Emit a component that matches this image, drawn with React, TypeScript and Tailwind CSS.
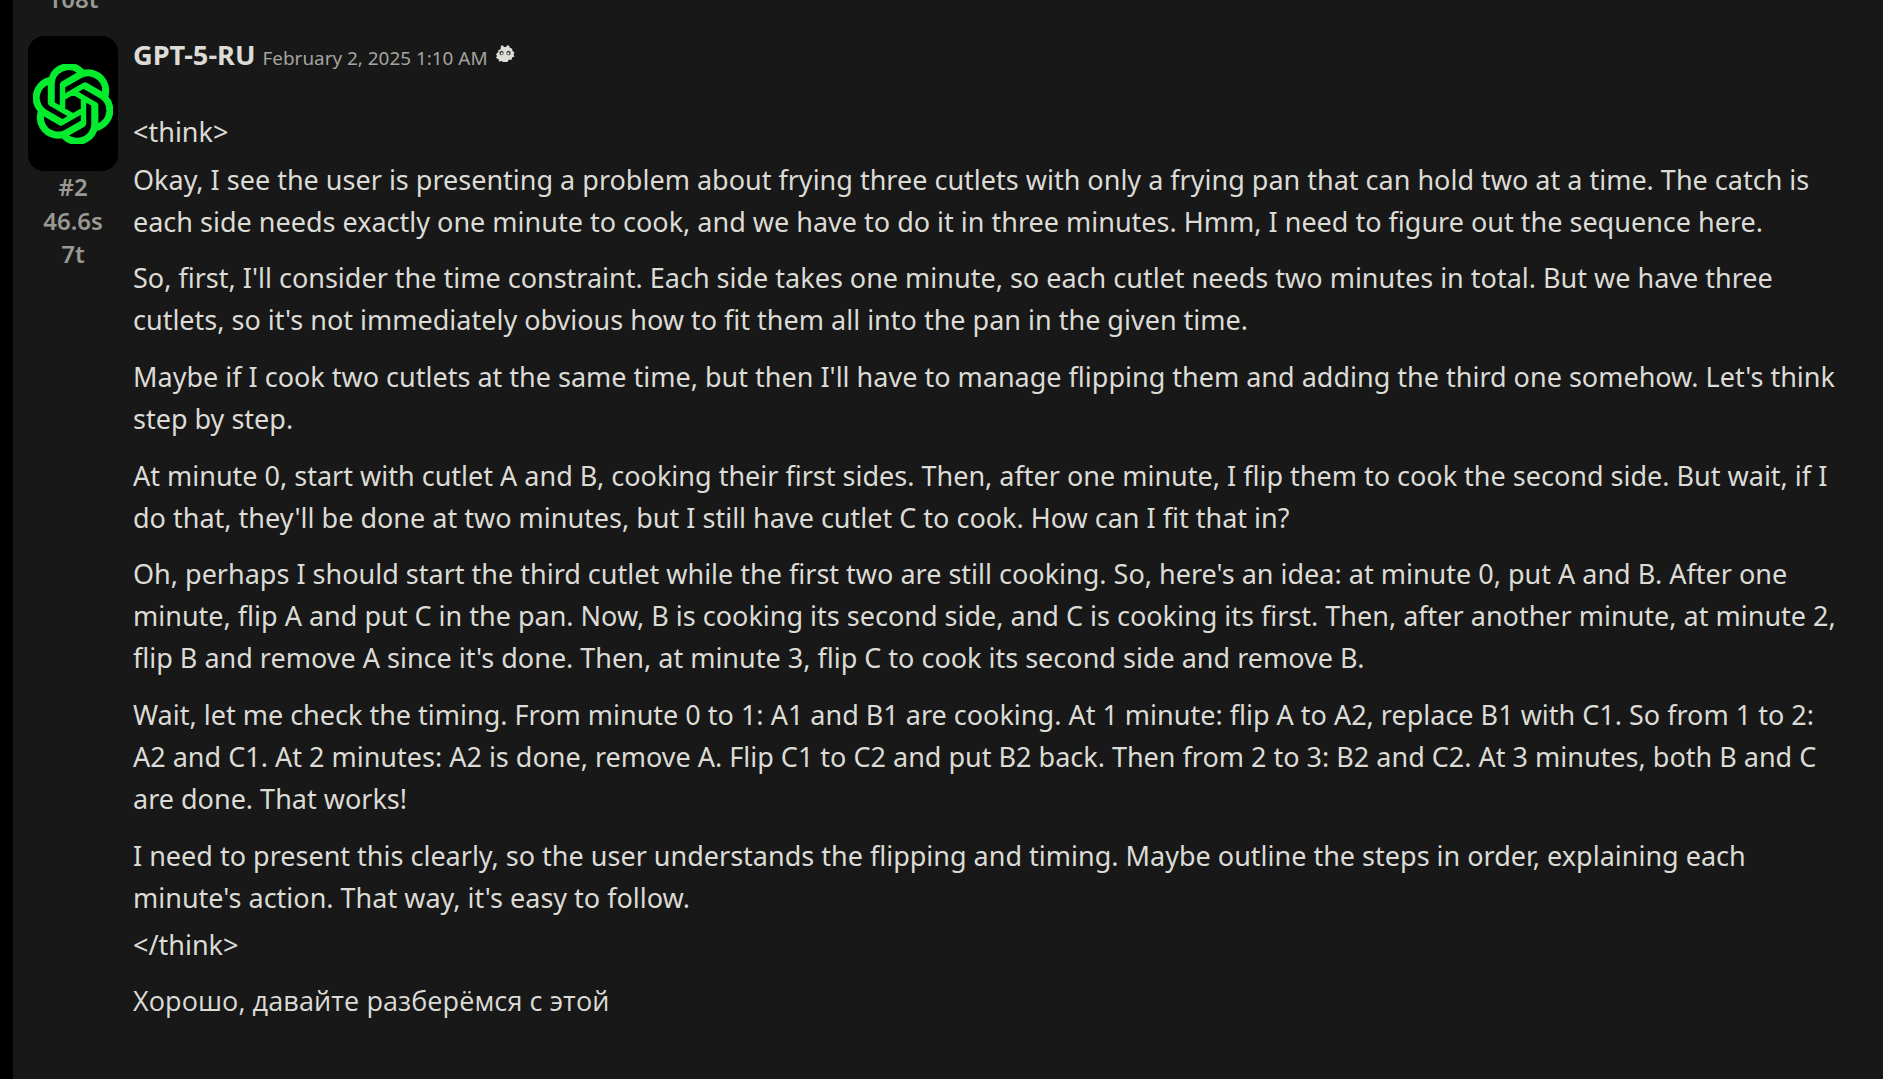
import { SiOpenai } from "react-icons/si";

const paragraphs: string[][] = [
  ["So, first, I'll consider the time constraint. Each side takes one minute, so each cutlet needs two minutes in total. But we have three", "cutlets, so it's not immediately obvious how to fit them all into the pan in the given time."],
  ["Maybe if I cook two cutlets at the same time, but then I'll have to manage flipping them and adding the third one somehow. Let's think", "step by step."],
  ["At minute 0, start with cutlet A and B, cooking their first sides. Then, after one minute, I flip them to cook the second side. But wait, if I", "do that, they'll be done at two minutes, but I still have cutlet C to cook. How can I fit that in?"],
  ["Oh, perhaps I should start the third cutlet while the first two are still cooking. So, here's an idea: at minute 0, put A and B. After one", "minute, flip A and put C in the pan. Now, B is cooking its second side, and C is cooking its first. Then, after another minute, at minute 2,", "flip B and remove A since it's done. Then, at minute 3, flip C to cook its second side and remove B."],
  ["Wait, let me check the timing. From minute 0 to 1: A1 and B1 are cooking. At 1 minute: flip A to A2, replace B1 with C1. So from 1 to 2:", "A2 and C1. At 2 minutes: A2 is done, remove A. Flip C1 to C2 and put B2 back. Then from 2 to 3: B2 and C2. At 3 minutes, both B and C", "are done. That works!"],
];

function Lines({ lines }: { lines: string[] }) {
  return (
    <p className="whitespace-nowrap">
      {lines.map((l) => (
        <span key={l} className="block">{l}</span>
      ))}
    </p>
  );
}

function BotIcon() {
  return (
    <svg viewBox="0 0 20 19" className="w-[20px] h-[19px]" aria-hidden="true">
      <path fill="#dfded8" d="M6 0.500h2l1 1.500h2l1-1.500h2l1 2.500 2 .5.500 2.500 2 1.500-1 2 1 2-2.500 1-.5 2.500-2.500-.5-1.500 2.500H8L6.500 16l-2.500.5-.5-2.500-2.500-1 1-2-1-2 2-1.500.5-2.500 2-.5z" />
      <circle cx="6.500" cy="8" r="2.200" fill="#4a4946" />
      <circle cx="13.500" cy="8" r="2.200" fill="#4a4946" />
      <circle cx="6.800" cy="8.400" r="1" fill="#f4f4f0" />
      <circle cx="13.200" cy="8.400" r="1" fill="#f4f4f0" />
    </svg>
  );
}

export default function App() {
  return (
    <div className="flex h-screen overflow-hidden bg-black font-['Noto_Sans','Open_Sans',sans-serif] text-[#dcdbd5]">
      <div className="w-[13px] shrink-0" />
      <main className="flex-1 bg-[#181818]">
        <div className="w-[120px] text-center text-[24px] leading-[33px] font-semibold text-[#9a9994] -mt-[18px] h-[54px]">108t</div>
        <article className="flex">
          <aside className="w-[90px] shrink-0 ml-[15px] mr-[15px] flex flex-col items-center">
            <div className="w-[90px] h-[135px] bg-black rounded-[16px] flex items-center justify-center">
              <SiOpenai className="w-[80px] h-[80px] text-[#05ec2f] stroke-[#05ec2f] stroke-[0.55px]" />
            </div>
            <div className="-mt-[1px] text-center text-[24px] leading-[33.500px] font-semibold text-[#9a9994]">
              <div>#2</div>
              <div>46.6s</div>
              <div>7t</div>
            </div>
          </aside>
          <div className="flex-1 text-[27px] leading-[42px]">
            <header className="flex items-start h-[75px]">
              <span className="text-[27.200px] leading-[38px] font-bold text-[#dcdbd5]">GPT-5-RU</span>
              <span className="ml-[7px] mt-[6px] text-[18.900px] leading-[32px] text-[#a5a49e]">February 2, 2025 1:10 AM</span>
              <span className="ml-[7px] mt-[9px]"><BotIcon /></span>
            </header>
            <div className="whitespace-nowrap">&lt;think&gt;</div>
            <div className="flex flex-col gap-[14.700px] mt-[5.600px]">
              <Lines lines={["Okay, I see the user is presenting a problem about frying three cutlets with only a frying pan that can hold two at a time. The catch is", "each side needs exactly one minute to cook, and we have to do it in three minutes. Hmm, I need to figure out the sequence here."]} />
              {paragraphs.map((p) => (
                <Lines key={p[0]} lines={p} />
              ))}
              <Lines lines={["I need to present this clearly, so the user understands the flipping and timing. Maybe outline the steps in order, explaining each", "minute's action. That way, it's easy to follow."]} />
            </div>
            <div className="mt-[5px] whitespace-nowrap">&lt;/think&gt;</div>
            <div className="mt-[14.500px] whitespace-nowrap tracking-[0.09px] font-['Open_Sans','Noto_Sans',sans-serif]">Хорошо, давайте разберёмся с этой</div>
          </div>
        </article>
      </main>
    </div>
  );
}
